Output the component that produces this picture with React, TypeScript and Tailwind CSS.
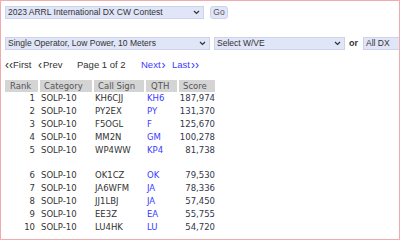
import React from 'react'

type Row = { rank: number; cat: string; call: string; qth: string; score: string }

const rowsA: Row[] = [
  { rank: 1, cat: 'SOLP-10', call: 'KH6CJJ', qth: 'KH6', score: '187,974' },
  { rank: 2, cat: 'SOLP-10', call: 'PY2EX', qth: 'PY', score: '131,370' },
  { rank: 3, cat: 'SOLP-10', call: 'F5OGL', qth: 'F', score: '125,670' },
  { rank: 4, cat: 'SOLP-10', call: 'MM2N', qth: 'GM', score: '100,278' },
  { rank: 5, cat: 'SOLP-10', call: 'WP4WW', qth: 'KP4', score: '81,738' },
]

const rowsB: Row[] = [
  { rank: 6, cat: 'SOLP-10', call: 'OK1CZ', qth: 'OK', score: '79,530' },
  { rank: 7, cat: 'SOLP-10', call: 'JA6WFM', qth: 'JA', score: '78,336' },
  { rank: 8, cat: 'SOLP-10', call: 'JJ1LBJ', qth: 'JA', score: '57,450' },
  { rank: 9, cat: 'SOLP-10', call: 'EE3Z', qth: 'EA', score: '55,755' },
  { rank: 10, cat: 'SOLP-10', call: 'LU4HK', qth: 'LU', score: '54,720' },
]

function Chevron() {
  return (
    <svg width="7" height="5" viewBox="0 0 7 5" className="shrink-0">
      <polyline points="1,1 3.5,3.5 6,1" fill="none" stroke="#333" strokeWidth="1.2" />
    </svg>
  )
}

function FakeSelect({ label, width, arrow = true }: { label: string; width: string; arrow?: boolean }) {
  return (
    <div
      className={`${width} shrink-0 h-[13px] flex items-center justify-between pl-[2px] pr-[3px] bg-[#e0e5f7] border border-[#cdd3ea] text-[#333] text-[8.5px] leading-none overflow-hidden`}
    >
      <span className="whitespace-nowrap">{label}</span>
      {arrow ? <Chevron /> : null}
    </div>
  )
}

function DataRow({ row }: { row: Row }) {
  return (
    <tr className="h-[13px]">
      <td className="text-right pr-[3px] p-0">{row.rank}</td>
      <td className="pl-[1px] p-0">{row.cat}</td>
      <td className="pl-[1px] p-0">{row.call}</td>
      <td className="pl-[1px] p-0 text-[#3a3aff]">{row.qth}</td>
      <td className="text-right p-0 text-[#33364a]">{row.score}</td>
    </tr>
  )
}

export default function App() {
  return (
    <div className="w-[400px] h-[240px] bg-white border border-[#f4a9aa] pl-[4px] pt-[4px] overflow-hidden font-['Liberation_Sans',Arial,sans-serif]">
      <div className="flex items-center gap-[6px] h-[14px]">
        <FakeSelect label="2023 ARRL International DX CW Contest" width="w-[199px]" />
        <div className="w-[18px] shrink-0 h-[13px] rounded-[3px] bg-[#e0e5f7] border border-[#cdd3ea] text-[#555] text-[8.5px] leading-none flex items-center justify-center">
          Go
        </div>
      </div>

      <div className="flex items-center mt-[18px] h-[13px] overflow-hidden">
        <FakeSelect label="Single Operator, Low Power, 10 Meters" width="w-[205px]" />
        <div className="w-[4px] shrink-0" />
        <FakeSelect label="Select W/VE" width="w-[131px]" />
        <span className="shrink-0 ml-[4px] mr-[5px] font-bold text-[9px] text-[#333] leading-none">or</span>
        <FakeSelect label="All DX" width="w-[60px]" arrow={false} />
      </div>

      <div className="flex items-center mt-[9px] h-[12px] text-[9.5px] leading-none whitespace-nowrap">
        <span className="text-[#333] w-[33px] flex items-center"><span className="text-[12px]">‹‹</span>First</span>
        <span className="text-[#333] w-[39px] flex items-center"><span className="text-[12px] mr-[1px]">‹</span>Prev</span>
        <span className="text-[#333] w-[64px]">Page 1 of 2</span>
        <span className="text-[#3a3aff] w-[31px] flex items-center">Next<span className="text-[12px] ml-[1px]">›</span></span>
        <span className="text-[#3a3aff] flex items-center">Last<span className="text-[12px] ml-[1px]">››</span></span>
      </div>

      <table className="mt-[9px] -ml-[2px] border-separate border-spacing-x-[2px] border-spacing-y-0 text-[8.5px] leading-none text-[#333] font-['DejaVu_Sans',Verdana,sans-serif]">
        <thead>
          <tr className="h-[12px] text-[#555]">
            <th className="w-[33px] p-0 pl-[5px] text-left font-normal bg-[#d4d4d4]">Rank</th>
            <th className="w-[52px] p-0 pl-[4px] text-left font-normal bg-[#d4d4d4]">Category</th>
            <th className="w-[50px] p-0 pl-[4px] text-left font-normal bg-[#d4d4d4]">Call Sign</th>
            <th className="w-[31px] p-0 pl-[5px] text-left font-normal bg-[#d4d4d4]">QTH</th>
            <th className="w-[36px] p-0 pl-[4px] text-left font-normal bg-[#d4d4d4]">Score</th>
          </tr>
        </thead>
        <tbody>
          {rowsA.map((r) => <DataRow key={r.rank} row={r} />)}
          <tr className="h-[12px]"><td colSpan={5} className="p-0" /></tr>
          {rowsB.map((r) => <DataRow key={r.rank} row={r} />)}
        </tbody>
      </table>
    </div>
  )
}
